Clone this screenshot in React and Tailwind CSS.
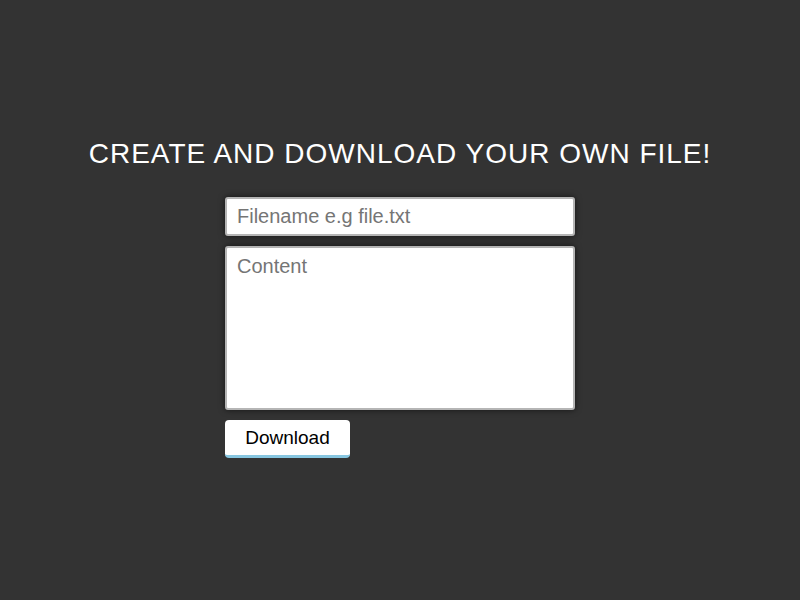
export default function App() {
  return (
    <div className="min-h-screen w-full bg-[#333333] flex flex-col items-center pt-[138px]" style={{ fontFamily: '"Liberation Sans", Arial, sans-serif' }}>
      <h1 className="text-[28px] leading-[32px] text-white tracking-[1px] font-normal">CREATE AND DOWNLOAD YOUR OWN FILE!</h1>
      <div className="mt-[27px] w-[350px] flex flex-col">
        <input
          type="text"
          placeholder="Filename e.g file.txt"
          className="h-[39px] w-full bg-white border-2 border-[#b5b5b5] rounded-[3px] px-[10px] text-[20px] text-black placeholder:text-[#757575] shadow-[0_0_6px_rgba(0,0,0,0.6)] outline-none"
        />
        <textarea
          placeholder="Content"
          className="mt-[10px] h-[164px] w-full bg-white border-2 border-[#b5b5b5] rounded-[3px] px-[10px] py-[3px] text-[20px] text-black placeholder:text-[#757575] shadow-[0_0_6px_rgba(0,0,0,0.6)] outline-none resize-none"
        />
        <div className="mt-[10px]">
          <button className="h-[38px] w-[125px] bg-white rounded-[4px] border-b-[3px] border-[#87c6e0] text-[19px] text-black leading-none">
            Download
          </button>
        </div>
      </div>
    </div>
  );
}
